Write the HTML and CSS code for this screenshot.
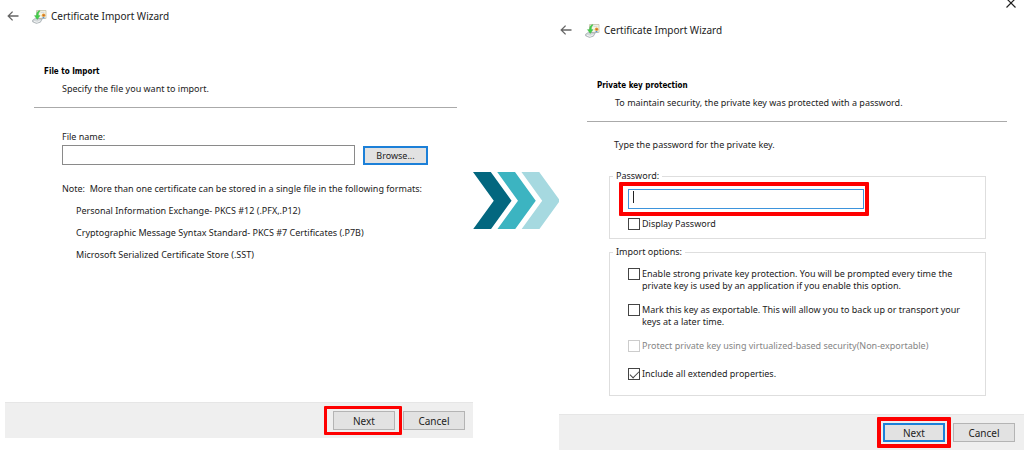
FILE: index.html
```
<!DOCTYPE html>
<html lang="en">
<head>
    <meta charset="UTF-8">
    <meta name="viewport" content="width=device-width, initial-scale=1.0">
    <title>Certificate Import Wizard</title>
    <link rel="stylesheet" href="styles.css">
</head>
<body>
    <!-- shared icons -->
    <svg class="defs" width="0" height="0" aria-hidden="true">
        <symbol id="icon-back" viewBox="0 0 12 12">
            <path d="M11.5 6H1.2M5.6 1.6L1.2 6l4.400 4.400" fill="none" stroke="#666" stroke-width="1.300"/>
        </symbol>
        <symbol id="icon-cert" viewBox="0 0 15 15">
            <path d="M4.500 1.500h9.500v8H4.500z" fill="#f7f5e6" stroke="#c3c1a8" stroke-width=".8"/>
            <path d="M8.500 3.300h4M9.500 8h3" stroke="#c9cfd8" stroke-width=".8"/>
            <path d="M.6 11.200l3-2 6.600.8-1.800 3.200-4 1.200-3.800-1.600z" fill="#d3d8da" stroke="#8f999e" stroke-width=".6"/>
            <path d="M2 12.300l3.200 1 3.200-1.600" fill="none" stroke="#fff" stroke-width=".7"/>
            <path d="M7.600 1.400C5.400 2 4.400 3.800 4.500 6.600H2.400l2.900 4 2.800-4H6.400c-.1-2 .3-3.400 1.700-4.300z" fill="#43cf4b" stroke="#2ea33a" stroke-width=".3"/>
            <circle cx="11.600" cy="6.200" r="1.800" fill="#e7a33a"/>
            <circle cx="11.800" cy="6.200" r=".8" fill="#c4562c"/>
            <path d="M10.800 8l-.5 1.700 1.200-.5 1.100.5-.4-1.700z" fill="#5b8fd0"/>
        </symbol>
    </svg>

    <main class="steps">
        <section class="window window-file">
            <header class="titlebar">
                <button class="back" type="button" aria-label="Back"><svg width="12" height="12"><use href="#icon-back"/></svg></button>
                <svg class="app-icon" width="15" height="15"><use href="#icon-cert"/></svg>
                <h1>Certificate Import Wizard</h1>
            </header>
            <div class="intro">
                <h2>File to Import</h2>
                <p>Specify the file you want to import.</p>
            </div>
            <div class="content">
                <label for="file-name">File name:</label>
                <div class="file-row">
                    <input type="text" id="file-name">
                    <button class="button default" type="button">Browse...</button>
                </div>
                <p class="note">Note:&nbsp; More than one certificate can be stored in a single file in the following formats:</p>
                <ul class="formats">
                    <li>Personal Information Exchange- PKCS #12 (.PFX,.P12)</li>
                    <li>Cryptographic Message Syntax Standard- PKCS #7 Certificates (.P7B)</li>
                    <li>Microsoft Serialized Certificate Store (.SST)</li>
                </ul>
            </div>
            <footer class="actions">
                <span class="marked"><button class="button" type="button">Next</button></span>
                <button class="button" type="button">Cancel</button>
            </footer>
        </section>

        <svg class="chevrons" viewBox="0 0 87 58" aria-hidden="true">
            <path d="M0 0h18l21 29-21 29H0l21-29z" fill="#03677f"/>
            <path d="M24.500 0h18l21 29-21 29h-18l21-29z" fill="#3cb4c1"/>
            <path d="M49 0h18l21 29-21 29H49l21-29z" fill="#a6d9e0"/>
        </svg>

        <section class="window window-key">
            <div class="caption">
                <button class="close" type="button" aria-label="Close"><svg width="10" height="10" viewBox="0 0 10 10"><path d="M.5 -1.500l9 9M9.500 -1.500l-9 9" fill="none" stroke="#222" stroke-width="1.200"/></svg></button>
            </div>
            <header class="titlebar">
                <button class="back" type="button" aria-label="Back"><svg width="12" height="12"><use href="#icon-back"/></svg></button>
                <svg class="app-icon" width="15" height="15"><use href="#icon-cert"/></svg>
                <h1>Certificate Import Wizard</h1>
            </header>
            <div class="intro">
                <h2>Private key protection</h2>
                <p>To maintain security, the private key was protected with a password.</p>
            </div>
            <div class="content">
                <p>Type the password for the private key.</p>
                <fieldset class="group group-password">
                    <legend><label for="password">Password:</label></legend>
                    <div class="password-box">
                        <input type="password" id="password">
                        <span class="caret"></span>
                    </div>
                    <label class="check"><input type="checkbox">Display Password</label>
                </fieldset>
                <fieldset class="group group-options">
                    <legend>Import options:</legend>
                    <label class="check"><input type="checkbox"><span>Enable strong private key protection. You will be prompted every time the<br>private key is used by an application if you enable this option.</span></label>
                    <label class="check"><input type="checkbox"><span>Mark this key as exportable. This will allow you to back up or transport your<br>keys at a later time.</span></label>
                    <label class="check disabled"><input type="checkbox" disabled>Protect private key using virtualized-based security(Non-exportable)</label>
                    <label class="check"><input type="checkbox" checked>Include all extended properties.</label>
                </fieldset>
            </div>
            <footer class="actions">
                <span class="marked thick"><button class="button default" type="button">Next</button></span>
                <button class="button" type="button">Cancel</button>
            </footer>
        </section>
    </main>
</body>
</html>
```
FILE: styles.css
```
* {
    box-sizing: border-box;
}
body {
    margin: 0;
    background: #fff;
    color: #222;
    font-family: "Noto Sans", "DejaVu Sans Condensed", sans-serif;
    font-size: 9px;
    line-height: 12px;
}
h1, h2, p, ul, fieldset, legend {
    margin: 0;
    padding: 0;
}
button, input {
    font: inherit;
    color: inherit;
    margin: 0;
}
.defs {
    position: absolute;
}
.steps {
    display: grid;
    grid-template-columns: 468fr 86fr 465fr;
    align-items: start;
    padding-left: 5px;
}
.window {
    display: flex;
    flex-direction: column;
}
.caption {
    display: flex;
    justify-content: flex-end;
    height: 14px;
    padding-right: 8px;
}
.back, .close {
    display: flex;
    padding: 0;
    border: 0;
    background: none;
}
.titlebar {
    display: flex;
    align-items: center;
    height: 32px;
    padding-left: 2px;
}
.app-icon {
    margin: 0 4px 0 13px;
}
h1 {
    font-size: 10px;
    font-weight: normal;
}
.intro {
    margin: 0 16px 0 29px;
    padding: 34px 0 12px 10px;
    border-bottom: 1px solid #aaa;
}
h2 {
    font-family: "DejaVu Sans Condensed", sans-serif;
    font-size: 8px;
    font-weight: bold;
    line-height: 12px;
    color: #000;
}
.intro p {
    margin-top: 5px;
    padding-left: 18px;
}
.content {
    padding: 23px 45px 131px 57px;
}
.file-row {
    display: flex;
    align-items: center;
    gap: 8px;
    margin-top: 2px;
}
.file-row input {
    flex: 1;
    min-width: 0;
    height: 20px;
    border: 1px solid #8a8a8a;
    background: #fff;
}
.button {
    width: 62px;
    height: 19px;
    padding: 0;
    border: 1px solid #b4b4b4;
    background: #e2e2e2;
}
.button.default {
    border: 2px solid #1c80d8;
}
.file-row .button {
    width: 65px;
    line-height: 15px;
}
.note {
    margin-top: 18px;
}
.formats {
    margin-top: 10px;
    padding-left: 14px;
    list-style: none;
}
.formats li {
    margin-bottom: 10px;
}
.actions {
    display: flex;
    align-items: center;
    justify-content: flex-end;
    gap: 8px;
    height: 36px;
    padding-right: 8px;
    border-top: 1px solid #e6e6e6;
    background: #efefef;
}
.actions .button {
    font-size: 10px;
}
.marked {
    position: relative;
    display: flex;
}
/* red highlight around the button */
.marked::before {
    content: "";
    position: absolute;
    inset: -5px -7px -5px -9px;
    border: 3px solid #fe0000;
    border-radius: 1px;
    pointer-events: none;
}
.marked.thick::before {
    inset: -6px;
    border-width: 4px;
}
.chevrons {
    width: 100%;
    margin-top: 172px;
}
.window-key .titlebar {
    padding-left: 1px;
}
.window-key .intro {
    margin: 0 17px 0 28px;
}
.window-key .actions {
    padding-right: 9px;
}
.window-key .content {
    padding: 17px 38px 18px 50px;
}
.window-key .content > p {
    padding-left: 5px;
}
.group {
    border: 1px solid #dedede;
    min-width: 0;
}
.group legend {
    margin-left: 3px;
    padding: 0 3px;
}
.group-password {
    margin-top: 19px;
    padding: 0 0 8px;
}
.group-options {
    margin-top: 7px;
    padding: 10px 0 15px;
}
.password-box {
    position: relative;
    width: 250px;
    max-width: 100%;
    margin-left: 9px;
    padding: 3px 1px 3px 5px;
    border: 4px solid #fe0000;
    border-radius: 1px;
}
.password-box input {
    display: block;
    width: 100%;
    height: 20px;
    border: 1px solid #3d94dc;
    background: #fff;
}
.caret {
    position: absolute;
    left: 10px;
    top: 5px;
    width: 1px;
    height: 12px;
    background: #222;
}
.check {
    display: flex;
    align-items: flex-start;
    gap: 2px;
    margin-left: 18px;
}
.check input {
    appearance: none;
    flex: none;
    display: grid;
    place-items: center;
    width: 12px;
    height: 12px;
    border: 1px solid #444;
    background: #fff;
}
.check input:checked::before {
    content: "";
    width: 8px;
    height: 4px;
    border: solid #444;
    border-width: 0 0 1px 1px;
    transform: translateY(-1px) rotate(-45deg);
}
.group-password .check {
    margin-top: 2px;
}
.group-options .check + .check {
    margin-top: 12px;
}
.group-options .check:last-child {
    margin-top: 16px;
}
.check.disabled {
    color: #858585;
}
.check.disabled input {
    border-color: #ccc;
}
```
